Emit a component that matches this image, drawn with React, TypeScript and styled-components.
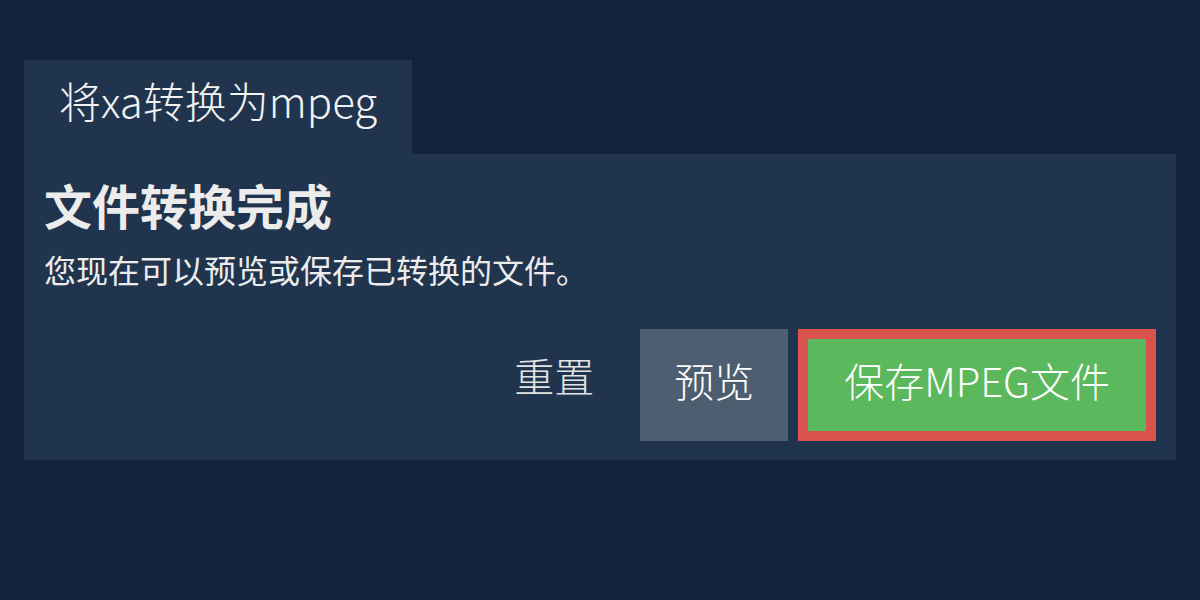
import React from 'react';
import styled, { createGlobalStyle } from 'styled-components';

// ============================================
// GLOBAL
// ============================================

const GlobalStyle = createGlobalStyle`
  html, body {
    margin: 0;
    padding: 0;
    background-color: #11233a;
  }

  body {
    font-family: "Noto Sans CJK SC", "Noto Sans", sans-serif;
    color: #eeeeee;
  }
`;

// ============================================
// STYLED COMPONENTS
// ============================================

const Page = styled.div`
  width: 1200px;
  height: 600px;
  padding: 60px 24px 0;
  box-sizing: border-box;
  display: flex;
  flex-direction: column;
  align-items: flex-start;
`;

const Tab = styled.div`
  height: 94px;
  box-sizing: border-box;
  padding: 0 35px 16px 35px;
  display: flex;
  align-items: center;
  background-color: #20344d;
  font-size: 42px;
  font-weight: 300;
  color: #f2f2f2;
`;

const Panel = styled.div`
  align-self: stretch;
  background-color: #20344d;
  padding: 20px 20px 19px;
  display: flex;
  flex-direction: column;
`;

const Title = styled.h1`
  margin: 0;
  font-size: 48px;
  line-height: 60px;
  font-weight: 700;
  color: #ececec;
`;

const Subtitle = styled.p`
  margin: 13px 0 0;
  font-size: 32px;
  line-height: 44px;
  color: #ececec;
`;

const Actions = styled.div`
  margin-top: 38px;
  display: flex;
  justify-content: flex-end;
  gap: 10px;
`;

const Button = styled.button<{ $variant: 'plain' | 'muted' | 'primary' }>`
  height: 112px;
  box-sizing: border-box;
  font-family: inherit;
  font-size: 40px;
  font-weight: 300;
  color: #ffffff;
  cursor: pointer;

  ${(props) =>
    props.$variant === 'plain'
      ? `
    background: transparent;
    border: none;
    padding: 0 36px 20px;
    color: #e4e4e4;
  `
      : props.$variant === 'muted'
      ? `
    background-color: #4d5e70;
    border: none;
    padding: 0 34px 10px;
  `
      : `
    background-color: #5cb85c;
    border: 10px solid #d9534f;
    padding: 0 36px 10px;
  `}
`;

// ============================================
// APP
// ============================================

export default function App() {
  return (
    <>
      <GlobalStyle />
      <Page>
        <Tab>将xa转换为mpeg</Tab>
        <Panel>
          <Title>文件转换完成</Title>
          <Subtitle>您现在可以预览或保存已转换的文件。</Subtitle>
          <Actions>
            <Button $variant="plain">重置</Button>
            <Button $variant="muted">预览</Button>
            <Button $variant="primary">保存MPEG文件</Button>
          </Actions>
        </Panel>
      </Page>
    </>
  );
}
